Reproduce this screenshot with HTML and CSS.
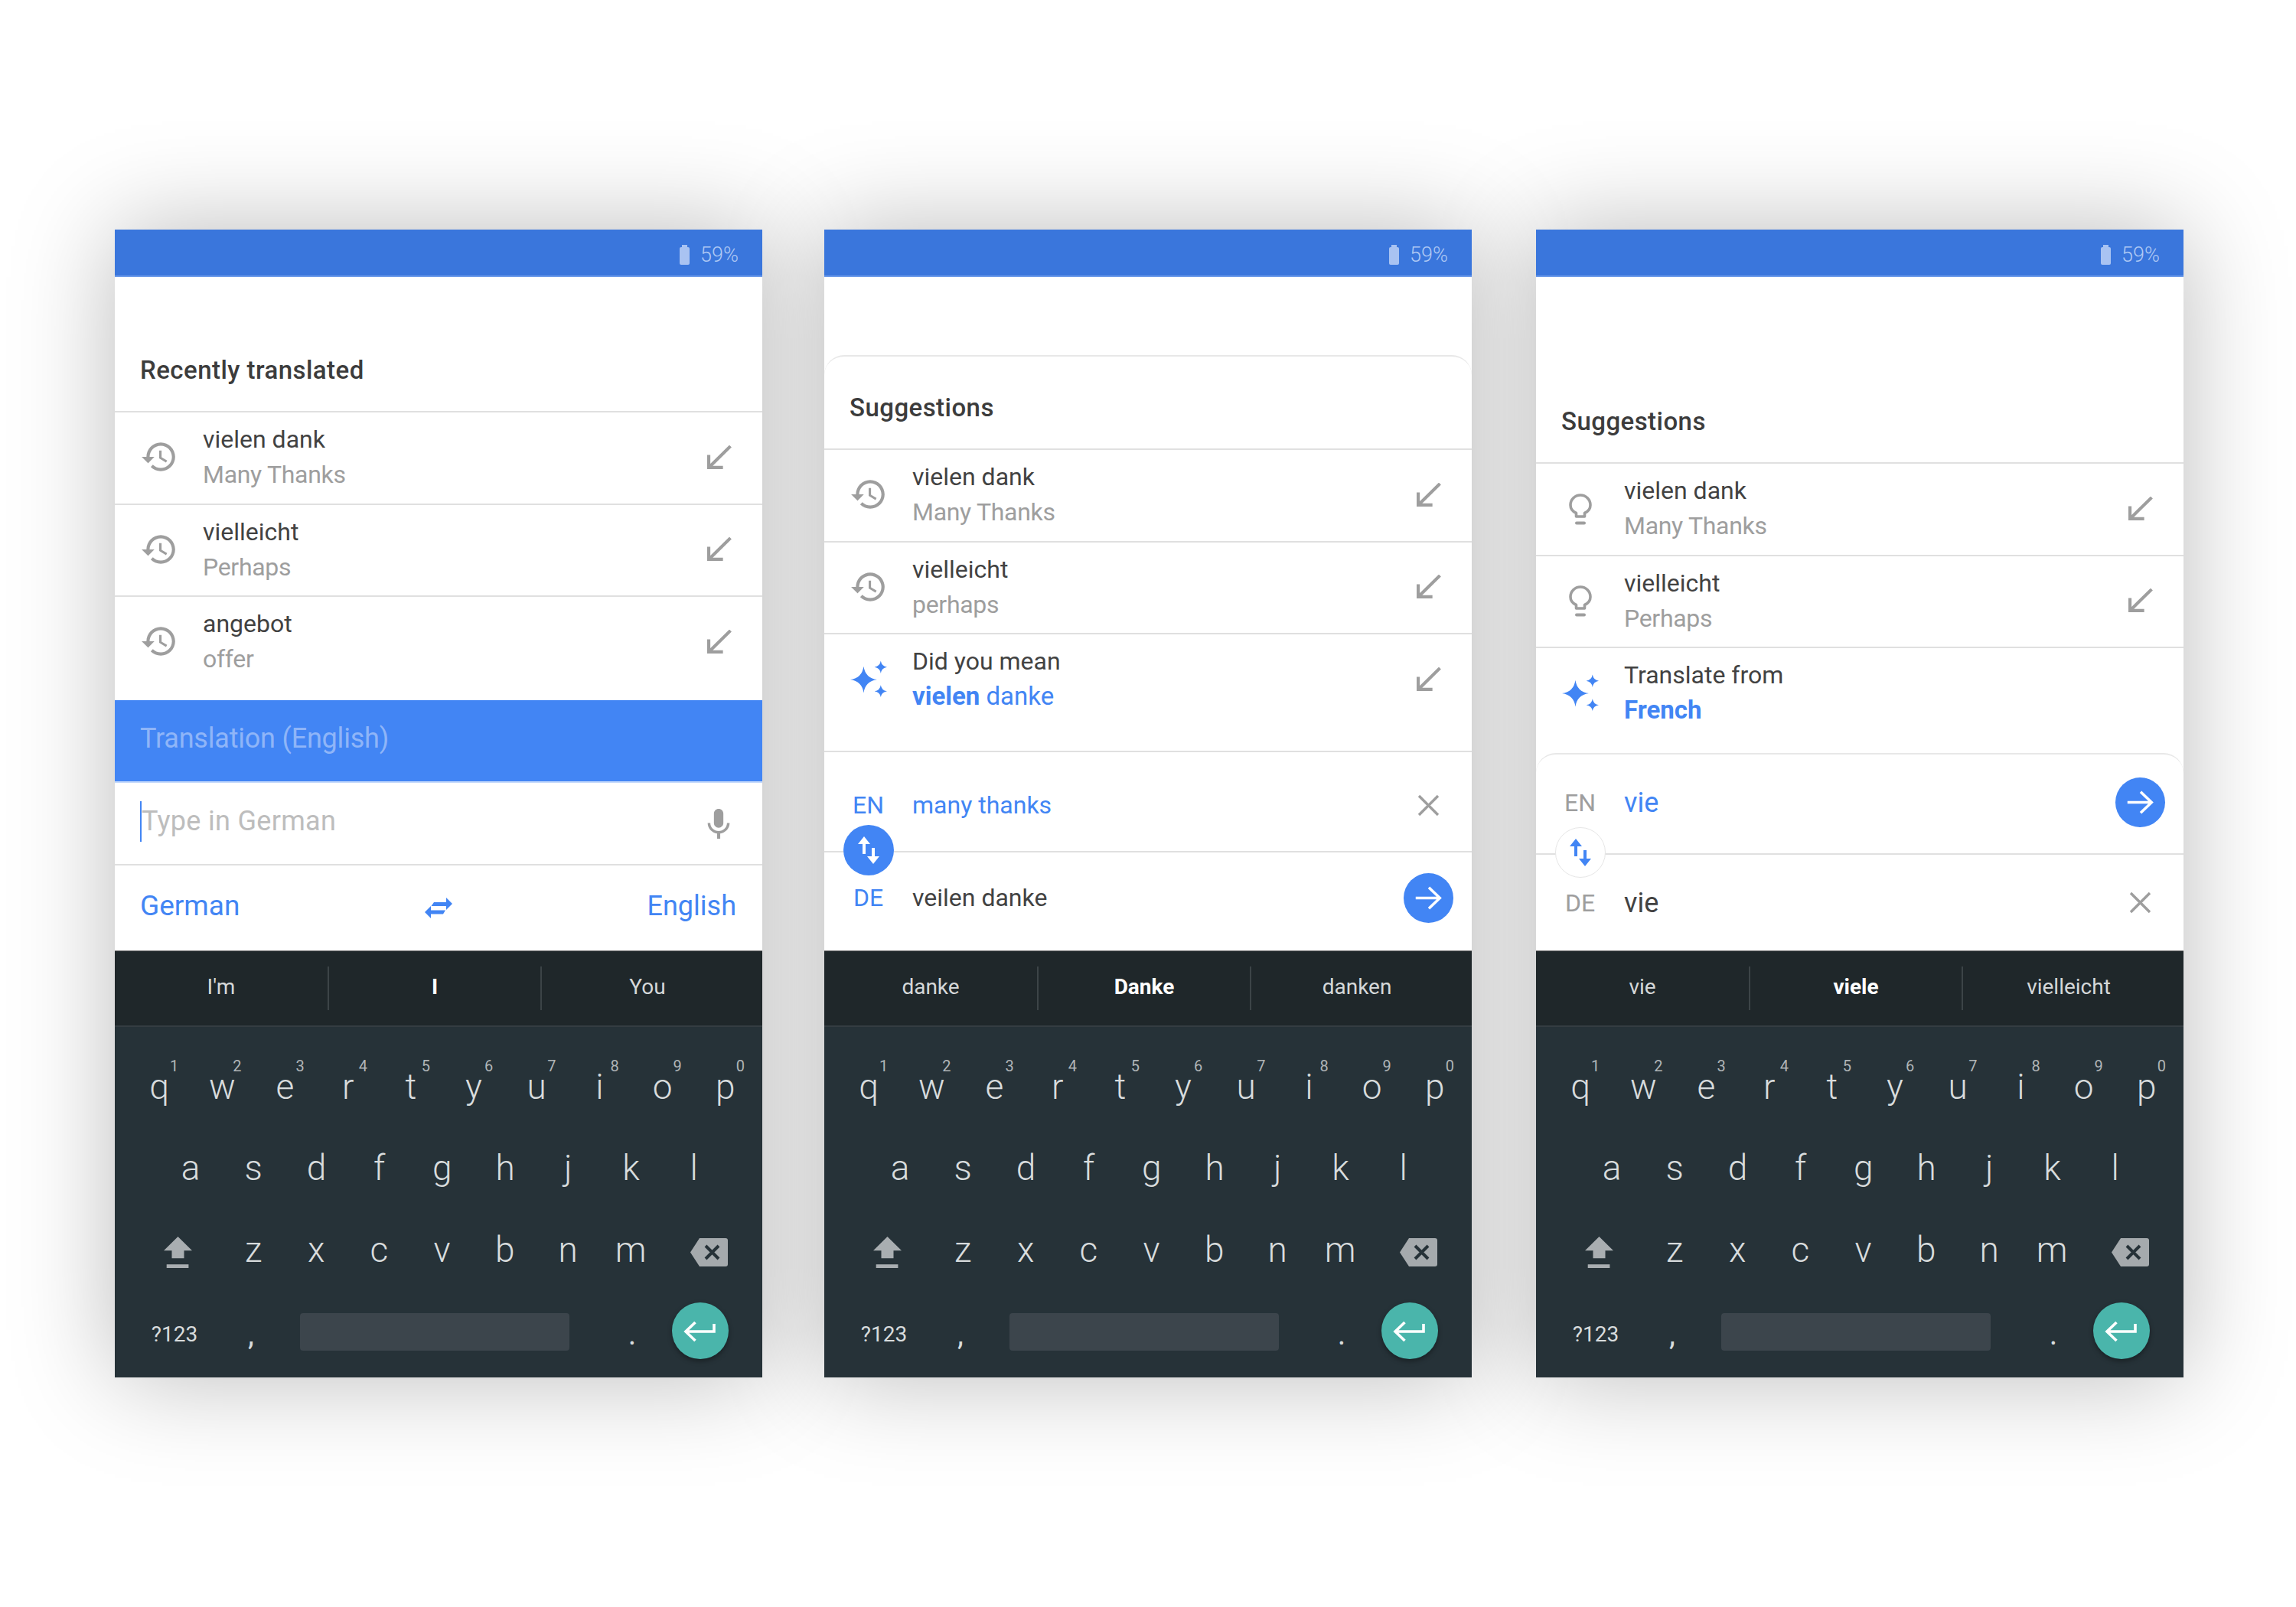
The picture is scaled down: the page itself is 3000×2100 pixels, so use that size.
FILE: index.html
```html
<!DOCTYPE html>
<html lang="de">
<head>
  <meta charset="UTF-8">
  <title>Translate keyboard</title>
  <link rel="stylesheet" href="styles.css">
</head>
<body>
  <svg class="sprite" xmlns="http://www.w3.org/2000/svg">
    <symbol id="i-history" viewBox="0 0 24 24"><path d="M13 3c-4.97 0-9 4.03-9 9H1l3.89 3.89.07.14L9 12H6c0-3.87 3.13-7 7-7s7 3.13 7 7-3.13 7-7 7c-1.93 0-3.68-.79-4.94-2.06l-1.42 1.42C8.27 19.99 10.51 21 13 21c4.97 0 9-4.03 9-9s-4.03-9-9-9zm-1 5v5l4.28 2.54.72-1.21-3.5-2.08V8H12z"/></symbol>
    <symbol id="i-insert" viewBox="0 0 31 30"><path d="M2 12v16h18M2.500 27.500 29.500 1" fill="none" stroke="currentColor" stroke-width="4"/></symbol>
    <symbol id="i-bulb" viewBox="0 0 30 41"><path d="M9.500 30v-4.500C5 23.500 2 19.500 2 15a13 13 0 0 1 26 0c0 4.500-3 8.500-7.500 10.500V30z" fill="none" stroke="currentColor" stroke-width="3.600" stroke-linejoin="round"/><path d="M10 38.500h10" fill="none" stroke="currentColor" stroke-width="4" stroke-linecap="round"/></symbol>
    <symbol id="i-spark" viewBox="0 0 44 44"><path d="M16 7Q18 21 32 23 18 25 16 39 14 25 0 23 14 21 16 7zM36.500 0.500Q37.500 7 44 8 37.500 9 36.500 15.500 35.500 9 29 8 35.500 7 36.500 0.500zM36.500 29.500Q37.500 36 44 37 37.500 38 36.500 44 35.500 38 29 37 35.500 36 36.500 29.500z"/></symbol>
    <symbol id="i-close" viewBox="0 0 29 29"><path d="M2 2l25 25M27 2 2 27" fill="none" stroke="currentColor" stroke-width="3.400"/></symbol>
    <symbol id="i-go" viewBox="0 0 66 66"><path d="M16 33h32M33.500 19 48 33 33.500 47" fill="none" stroke="currentColor" stroke-width="3.600"/></symbol>
    <symbol id="i-flip" viewBox="0 0 66 66"><path d="M27 15l8 10h-6v13h-4V25h-6zM39 51l8-10h-6V30h-4v11h-6z"/></symbol>
    <symbol id="i-mic" viewBox="5 2 14 19"><path d="M12 14c1.660 0 3-1.340 3-3V5c0-1.660-1.340-3-3-3S9 3.340 9 5v6c0 1.660 1.340 3 3 3zm5.300-3c0 3-2.540 5.100-5.300 5.100S6.700 14 6.700 11H5c0 3.410 2.720 6.230 6 6.720V21h2v-3.280c3.280-.48 6-3.300 6-6.720h-1.700z"/></symbol>
    <symbol id="i-swap" viewBox="0 0 36 27"><path d="M28 0l8 8-8 8v-5H8.500L12 6h16zM8 11v5.500h19L24 21.500H8V27l-8-8z"/></symbol>
    <symbol id="i-shift" viewBox="0 0 37 41"><path d="M18.500 0 37 18.300H26.500v10h-16v-10H0zM3.700 36.300h28.700V41H3.700z"/></symbol>
    <symbol id="i-back" viewBox="0 0 49 37"><path d="M12 0h34a3 3 0 0 1 3 3v31a3 3 0 0 1-3 3H12L0 18.500z"/><path d="M20 10l17 17M37 10 20 27" fill="none" stroke="#263238" stroke-width="4"/></symbol>
    <symbol id="i-enter" viewBox="0 0 74 74"><path d="M55 28v10H19M30.500 26 18 38l12.500 12" fill="none" stroke="currentColor" stroke-width="3.600"/></symbol>
  </svg>

  <div class="phones">

    <!-- 1: recently translated -->
    <div class="phone phone-a">
      <div class="status"><span class="battery"></span><span>59%</span></div>
      <div class="list-head">Recently translated</div>
      <div class="list">
        <div class="row">
          <svg class="row-icon"><use href="#i-history"/></svg>
          <div class="row-text"><div>vielen dank</div><div class="sub">Many Thanks</div></div>
          <div class="row-end"><svg class="insert"><use href="#i-insert"/></svg></div>
        </div>
        <div class="row">
          <svg class="row-icon"><use href="#i-history"/></svg>
          <div class="row-text"><div>vielleicht</div><div class="sub">Perhaps</div></div>
          <div class="row-end"><svg class="insert"><use href="#i-insert"/></svg></div>
        </div>
        <div class="row">
          <svg class="row-icon"><use href="#i-history"/></svg>
          <div class="row-text"><div>angebot</div><div class="sub">offer</div></div>
          <div class="row-end"><svg class="insert"><use href="#i-insert"/></svg></div>
        </div>
      </div>
      <div class="translation"><span>Translation (English)</span></div>
      <div class="input">
        <span class="caret"></span>
        <span class="placeholder">Type in German</span>
        <svg class="mic"><use href="#i-mic"/></svg>
      </div>
      <div class="langs">
        <span class="lang">German</span>
        <svg class="swap"><use href="#i-swap"/></svg>
        <span class="lang lang-end">English</span>
      </div>
      <div class="keyboard">
        <div class="strip"><span>I'm</span><span class="strong">I</span><span>You</span></div>
        <div class="keys">
          <div class="kb-row">
            <span class="key">q<i>1</i></span><span class="key">w<i>2</i></span><span class="key">e<i>3</i></span><span class="key">r<i>4</i></span><span class="key">t<i>5</i></span><span class="key">y<i>6</i></span><span class="key">u<i>7</i></span><span class="key">i<i>8</i></span><span class="key">o<i>9</i></span><span class="key">p<i>0</i></span>
          </div>
          <div class="kb-row kb-home">
            <span class="key">a</span><span class="key">s</span><span class="key">d</span><span class="key">f</span><span class="key">g</span><span class="key">h</span><span class="key">j</span><span class="key">k</span><span class="key">l</span>
          </div>
          <div class="kb-row kb-low">
            <span class="key-shift"><svg><use href="#i-shift"/></svg></span>
            <span class="key">z</span><span class="key">x</span><span class="key">c</span><span class="key">v</span><span class="key">b</span><span class="key">n</span><span class="key">m</span>
            <span class="key-back"><svg><use href="#i-back"/></svg></span>
          </div>
          <div class="kb-row kb-bottom">
            <span class="key-sym">?123</span>
            <span class="key-comma">,</span>
            <span class="key-space"></span>
            <span class="key-dot">.</span>
            <span class="key-enter"><svg><use href="#i-enter"/></svg></span>
          </div>
        </div>
      </div>
    </div>

    <!-- 2: did you mean -->
    <div class="phone phone-b">
      <div class="status"><span class="battery"></span><span>59%</span></div>
      <div class="list-head card-top">Suggestions</div>
      <div class="list">
        <div class="row">
          <svg class="row-icon"><use href="#i-history"/></svg>
          <div class="row-text"><div>vielen dank</div><div class="sub">Many Thanks</div></div>
          <div class="row-end"><svg class="insert"><use href="#i-insert"/></svg></div>
        </div>
        <div class="row">
          <svg class="row-icon"><use href="#i-history"/></svg>
          <div class="row-text"><div>vielleicht</div><div class="sub">perhaps</div></div>
          <div class="row-end"><svg class="insert"><use href="#i-insert"/></svg></div>
        </div>
        <div class="row">
          <svg class="row-icon spark"><use href="#i-spark"/></svg>
          <div class="row-text"><div>Did you mean</div><div class="link"><b>vielen</b> danke</div></div>
          <div class="row-end"><svg class="insert"><use href="#i-insert"/></svg></div>
        </div>
      </div>
      <div class="io">
        <div class="io-row io-en">
          <span class="io-lang blue">EN</span>
          <span class="io-text blue">many thanks</span>
          <span class="io-end"><svg class="close"><use href="#i-close"/></svg></span>
        </div>
        <div class="io-row io-de">
          <span class="io-lang blue">DE</span>
          <span class="io-text">veilen danke</span>
          <span class="io-end"><span class="go"><svg><use href="#i-go"/></svg></span></span>
        </div>
        <span class="flip"><svg><use href="#i-flip"/></svg></span>
      </div>
      <div class="keyboard">
        <div class="strip"><span>danke</span><span class="strong">Danke</span><span>danken</span></div>
        <div class="keys">
          <div class="kb-row">
            <span class="key">q<i>1</i></span><span class="key">w<i>2</i></span><span class="key">e<i>3</i></span><span class="key">r<i>4</i></span><span class="key">t<i>5</i></span><span class="key">y<i>6</i></span><span class="key">u<i>7</i></span><span class="key">i<i>8</i></span><span class="key">o<i>9</i></span><span class="key">p<i>0</i></span>
          </div>
          <div class="kb-row kb-home">
            <span class="key">a</span><span class="key">s</span><span class="key">d</span><span class="key">f</span><span class="key">g</span><span class="key">h</span><span class="key">j</span><span class="key">k</span><span class="key">l</span>
          </div>
          <div class="kb-row kb-low">
            <span class="key-shift"><svg><use href="#i-shift"/></svg></span>
            <span class="key">z</span><span class="key">x</span><span class="key">c</span><span class="key">v</span><span class="key">b</span><span class="key">n</span><span class="key">m</span>
            <span class="key-back"><svg><use href="#i-back"/></svg></span>
          </div>
          <div class="kb-row kb-bottom">
            <span class="key-sym">?123</span>
            <span class="key-comma">,</span>
            <span class="key-space"></span>
            <span class="key-dot">.</span>
            <span class="key-enter"><svg><use href="#i-enter"/></svg></span>
          </div>
        </div>
      </div>
    </div>

    <!-- 3: translate from -->
    <div class="phone phone-c">
      <div class="status"><span class="battery"></span><span>59%</span></div>
      <div class="list-head">Suggestions</div>
      <div class="list">
        <div class="row">
          <svg class="row-icon bulb"><use href="#i-bulb"/></svg>
          <div class="row-text"><div>vielen dank</div><div class="sub">Many Thanks</div></div>
          <div class="row-end"><svg class="insert"><use href="#i-insert"/></svg></div>
        </div>
        <div class="row">
          <svg class="row-icon bulb"><use href="#i-bulb"/></svg>
          <div class="row-text"><div>vielleicht</div><div class="sub">Perhaps</div></div>
          <div class="row-end"><svg class="insert"><use href="#i-insert"/></svg></div>
        </div>
        <div class="row">
          <svg class="row-icon spark"><use href="#i-spark"/></svg>
          <div class="row-text"><div>Translate from</div><div class="link"><b>French</b></div></div>
        </div>
      </div>
      <div class="io card-top">
        <div class="io-row io-en">
          <span class="io-lang">EN</span>
          <span class="io-text big blue">vie</span>
          <span class="io-end"><span class="go"><svg><use href="#i-go"/></svg></span></span>
        </div>
        <div class="io-row io-de">
          <span class="io-lang">DE</span>
          <span class="io-text big">vie</span>
          <span class="io-end"><svg class="close"><use href="#i-close"/></svg></span>
        </div>
        <span class="flip flip-off"><svg><use href="#i-flip"/></svg></span>
      </div>
      <div class="keyboard">
        <div class="strip"><span>vie</span><span class="strong">viele</span><span>vielleicht</span></div>
        <div class="keys">
          <div class="kb-row">
            <span class="key">q<i>1</i></span><span class="key">w<i>2</i></span><span class="key">e<i>3</i></span><span class="key">r<i>4</i></span><span class="key">t<i>5</i></span><span class="key">y<i>6</i></span><span class="key">u<i>7</i></span><span class="key">i<i>8</i></span><span class="key">o<i>9</i></span><span class="key">p<i>0</i></span>
          </div>
          <div class="kb-row kb-home">
            <span class="key">a</span><span class="key">s</span><span class="key">d</span><span class="key">f</span><span class="key">g</span><span class="key">h</span><span class="key">j</span><span class="key">k</span><span class="key">l</span>
          </div>
          <div class="kb-row kb-low">
            <span class="key-shift"><svg><use href="#i-shift"/></svg></span>
            <span class="key">z</span><span class="key">x</span><span class="key">c</span><span class="key">v</span><span class="key">b</span><span class="key">n</span><span class="key">m</span>
            <span class="key-back"><svg><use href="#i-back"/></svg></span>
          </div>
          <div class="kb-row kb-bottom">
            <span class="key-sym">?123</span>
            <span class="key-comma">,</span>
            <span class="key-space"></span>
            <span class="key-dot">.</span>
            <span class="key-enter"><svg><use href="#i-enter"/></svg></span>
          </div>
        </div>
      </div>
    </div>

  </div>
</body>
</html>
```

FILE: styles.css
```css
body {
  margin: 0;
  background: #fff;
  font-family: Roboto, "Liberation Sans", sans-serif;
  color: #424242;
}

.sprite {
  display: none;
}

.phones {
  display: flex;
  gap: 81px;
  padding: 300px 0 300px 150px;
}

.phone {
  position: relative;
  display: flex;
  flex-direction: column;
  width: 846px;
  height: 1500px;
  background: #fff;
}
.phone-c {
  margin-left: 3px;
}
/* shadow sits under every phone, so a neighbour never darkens the next one */
.phone::before {
  content: "";
  position: absolute;
  inset: 0;
  z-index: -1;
  box-shadow: 0 0 125px rgba(0, 0, 0, 0.27);
}

/* status bar */
.status {
  box-sizing: border-box;
  height: 62px;
  display: flex;
  align-items: center;
  justify-content: flex-end;
  gap: 14px;
  padding: 6px 31px 0 0;
  background: #3a76dc;
  border-bottom: 2px solid #6d9bea;
  color: #b0c9f4;
  font-size: 27px;
  font-weight: 300;
}
.battery {
  position: relative;
  width: 13px;
  height: 23px;
  margin-top: 3px;
  background: #a9c3f2;
  border-radius: 2px;
}
.battery::before {
  content: "";
  position: absolute;
  top: -3px;
  left: 3px;
  width: 7px;
  height: 3px;
  background: #a9c3f2;
}

/* suggestion list */
.list-head {
  box-sizing: border-box;
  display: flex;
  align-items: flex-end;
  height: 175px;
  padding: 0 33px 33px;
  font-size: 33px;
  line-height: 40px;
  font-weight: 500;
  letter-spacing: 0.45px;
  color: #3c3c3c;
}
.phone-b .list-head {
  height: 122px;
  margin-top: 102px;
}
.phone-c .list-head {
  height: 242px;
}
.card-top {
  border-top: 2px solid #e8e8e8;
  border-radius: 26px 26px 0 0;
}

.list {
  padding-bottom: 16.5px;
}
.phone-b .list {
  padding-bottom: 33.5px;
}
.phone-c .list {
  padding-bottom: 18.5px;
}

.row {
  box-sizing: border-box;
  height: 120.5px;
  display: flex;
  align-items: center;
  border-top: 2px solid #e0e0e0;
}
.row-icon {
  width: 50px;
  height: 50px;
  margin: 0 32.5px 2px;
  fill: #9e9e9e;
  color: #9e9e9e;
  flex: none;
}
.row-icon.bulb {
  width: 30px;
  height: 41px;
  margin: 0 42.5px;
}
.row-icon.spark {
  width: 48px;
  height: 48px;
  margin: 0 33.5px 2px;
  fill: #4285f4;
}
.row-text {
  flex: 1;
  align-self: flex-start;
  padding-top: 12px;
  font-size: 32px;
  line-height: 46px;
}
.sub {
  color: #9e9e9e;
  letter-spacing: -0.3px;
}
.link {
  color: #4285f4;
  font-size: 33px;
}
.link b {
  font-weight: 700;
}
.row-end {
  width: 113px;
  display: flex;
  justify-content: center;
}
.insert {
  width: 32px;
  height: 31px;
  margin-bottom: 2px;
  color: #9e9e9e;
}

/* phone 1: translation + input */
.translation {
  height: 106px;
  display: flex;
  align-items: center;
  padding-left: 33px;
  background: #4285f4;
  color: #8fb5f8;
  font-size: 36px;
  letter-spacing: -0.2px;
}
.translation span {
  margin-bottom: 6px;
}
.input {
  box-sizing: border-box;
  height: 108px;
  display: flex;
  align-items: center;
  padding-left: 33px;
  border-top: 2px solid #c4d9fb;
}
.caret {
  width: 2px;
  height: 53px;
  margin-bottom: 5px;
  background: #4285f4;
}
.placeholder {
  flex: 1;
  margin-bottom: 6px;
  color: #bdbdbd;
  font-size: 36px;
  letter-spacing: 0.3px;
}
.mic {
  width: 30px;
  height: 39px;
  margin-right: 42.5px;
  fill: #9e9e9e;
}
.langs {
  box-sizing: border-box;
  height: 113px;
  display: grid;
  grid-template-columns: 1fr auto 1fr;
  align-items: center;
  padding: 0 34px 0 33px;
  border-top: 2px solid #e0e0e0;
  color: #4285f4;
  font-size: 37px;
}
.lang {
  margin-bottom: 6px;
}
.lang-end {
  justify-self: end;
  font-size: 36px;
}
.swap {
  width: 36px;
  height: 27px;
  fill: #4285f4;
}

/* phones 2, 3: source and target fields */
.io {
  position: relative;
}
.io-row {
  box-sizing: border-box;
  display: flex;
  align-items: center;
  font-size: 32px;
  line-height: 46px;
}
.io-de {
  border-top: 2px solid #e0e0e0;
}
.phone-b .io-en {
  height: 131px;
  padding-top: 9px;
  border-top: 2px solid #e0e0e0;
}
.phone-b .io-de {
  height: 130px;
  padding-bottom: 10px;
}
.phone-c .io-en {
  height: 129px;
  padding-bottom: 4px;
}
.phone-c .io-de {
  height: 127px;
}
.io-lang {
  width: 115px;
  text-align: center;
  color: #9e9e9e;
}
.io-text {
  flex: 1;
}
.io-text.big {
  font-size: 36px;
}
.io-lang.blue,
.io-text.blue {
  color: #4285f4;
}
.io-end {
  width: 113px;
  display: flex;
  justify-content: center;
}
.close {
  width: 29px;
  height: 29px;
  color: #9e9e9e;
}
.go {
  width: 65px;
  height: 65px;
  border-radius: 50%;
  background: #4285f4;
  color: #fff;
}
.go svg {
  display: block;
  width: 65px;
  height: 65px;
}
.flip {
  position: absolute;
  left: 25px;
  top: 97px;
  width: 66px;
  height: 66px;
  border-radius: 50%;
  background: #4285f4;
  fill: #fff;
}
.flip svg {
  display: block;
  width: 66px;
  height: 66px;
}
.flip-off {
  box-sizing: border-box;
  top: 95px;
  background: #fff;
  border: 1px solid #e6e6e6;
  fill: #4285f4;
}
.flip-off svg {
  margin: -1px;
}

/* keyboard */
.keyboard {
  margin-top: auto;
  height: 558px;
  display: flex;
  flex-direction: column;
  background: #263238;
  border-top: 1px solid #777;
  box-sizing: border-box;
}
.strip {
  height: 99px;
  box-sizing: border-box;
  display: grid;
  grid-template-columns: 278px 278px 278px;
  align-items: center;
  background: #1f272a;
  border-bottom: 2px solid #343d42;
  color: #d5d8d9;
  font-size: 28px;
  text-align: center;
}
.strip span {
  height: 57px;
  line-height: 54px;
}
.strip span + span {
  border-left: 2px solid #3c4447;
}
.strip .strong {
  color: #fff;
  font-weight: 700;
}

.keys {
  padding-top: 26px;
}
.kb-row {
  display: flex;
  height: 106px;
  padding-left: 17px;
  color: #d8dcdd;
  font-size: 46px;
  font-weight: 300;
  line-height: 105px;
}
.kb-home {
  height: 107px;
  padding-left: 58px;
}
.kb-low {
  height: 102px;
  padding-left: 24px;
}
.key {
  position: relative;
  width: 82.2px;
  text-align: center;
}
.key i {
  position: absolute;
  top: 14px;
  left: calc(50% + 14px);
  color: #b0b5b7;
  font-size: 20px;
  font-style: normal;
  font-weight: 400;
  line-height: 22px;
}
.key-shift {
  width: 116px;
  display: flex;
  justify-content: center;
  align-items: center;
  margin-top: 8px;
}
.key-shift svg {
  width: 37px;
  height: 41px;
  fill: #a9aeb1;
}
.key-back {
  width: 122px;
  display: flex;
  justify-content: center;
  align-items: center;
  margin-top: 8px;
}
.key-back svg {
  width: 49px;
  height: 37px;
  fill: #a5aaad;
}

.kb-bottom {
  height: 105px;
  align-items: center;
}
.key-sym {
  width: 122px;
  margin-top: 16px;
  text-align: center;
  font-size: 28px;
  font-weight: 400;
  line-height: 40px;
}
.key-comma {
  width: 78px;
  margin-top: 16px;
  text-align: center;
  font-size: 40px;
  font-weight: 400;
  line-height: 46px;
}
.key-space {
  width: 352px;
  height: 49px;
  margin: 10px 0 0 25px;
  background: #3c454c;
  border-radius: 4px;
}
.key-dot {
  width: 80px;
  margin: 16px 0 0 42px;
  text-align: center;
  font-size: 40px;
  font-weight: 400;
  line-height: 46px;
}
.key-enter {
  width: 74px;
  height: 74px;
  margin: 6px 0 0 12px;
  border-radius: 50%;
  background: #4ab5ab;
  box-shadow: 0 3px 6px rgba(0, 0, 0, 0.35);
  color: #fff;
}
.key-enter svg {
  display: block;
  width: 74px;
  height: 74px;
}
```
